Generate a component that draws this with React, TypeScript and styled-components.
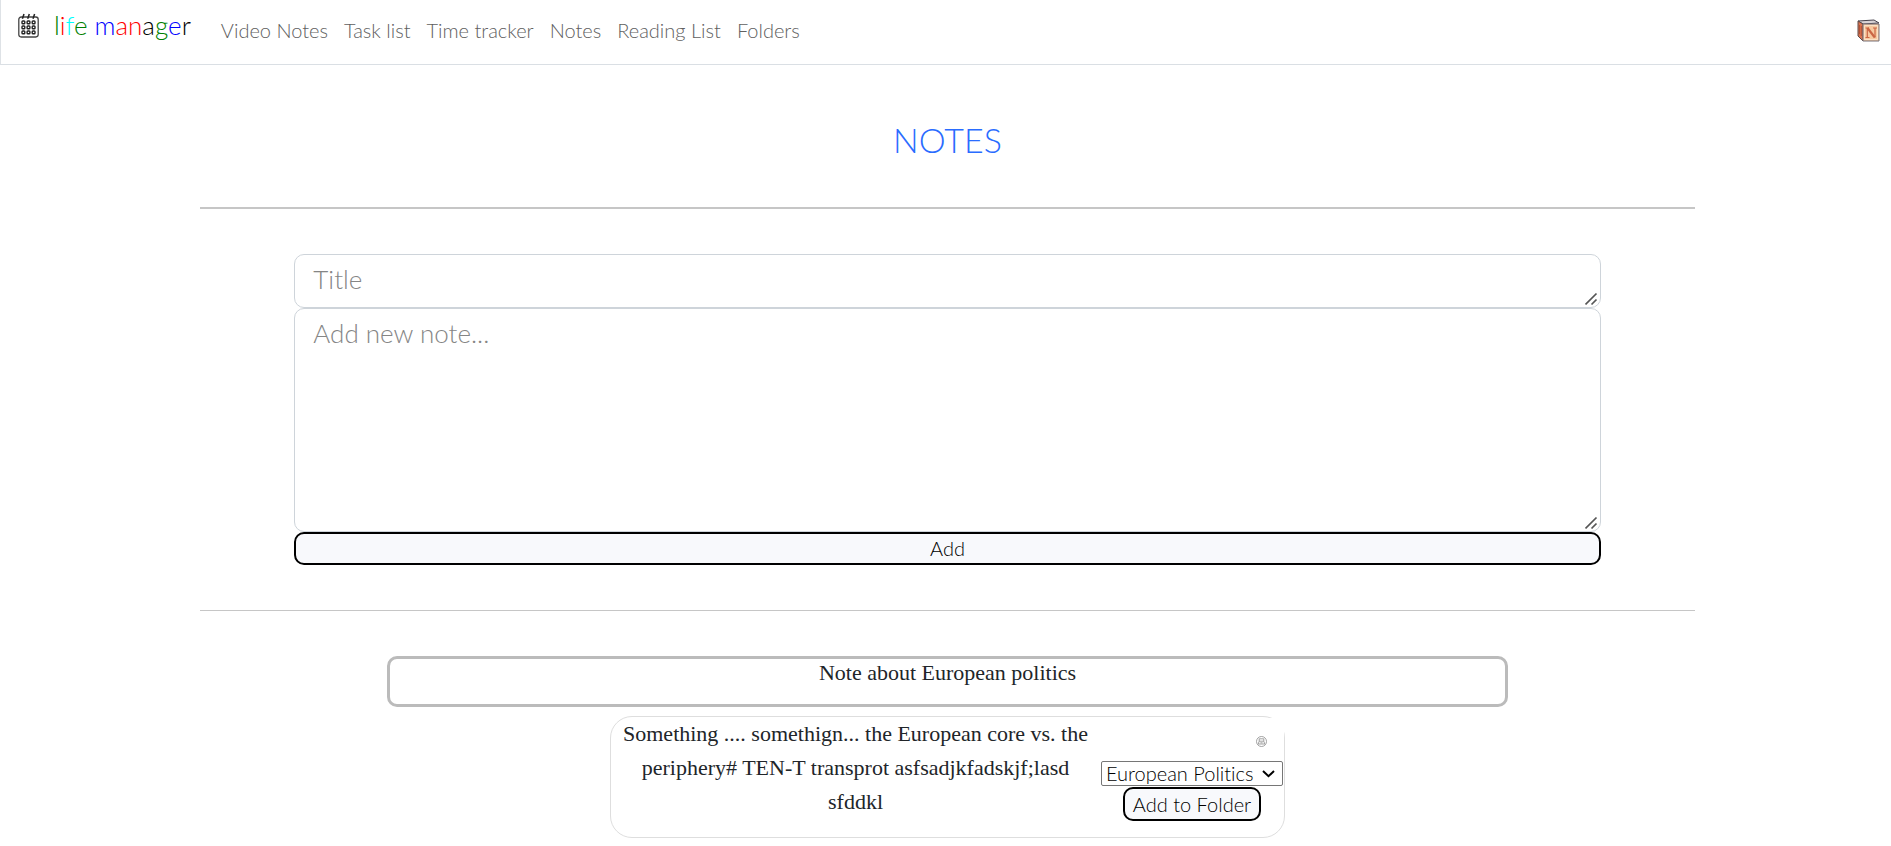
import React from 'react';
import styled, { createGlobalStyle } from 'styled-components';

const sans = "'Century Gothic', Lato, 'Open Sans', sans-serif";
const serif = "'Liberation Serif', 'Times New Roman', serif";

const resizeGrip =
  "data:image/svg+xml,%3Csvg xmlns='http://www.w3.org/2000/svg' width='17' height='17' fill='none' stroke='%23555' stroke-width='1.7'%3E%3Cpath d='M1.5 13.5 12.5 2.5M7.5 13.5l5-5'/%3E%3C/svg%3E";

const GlobalStyle = createGlobalStyle`
  *, *::before, *::after { box-sizing: border-box; }
  body {
    margin: 0;
    background: #fff;
    color: #212529;
    font-family: ${sans};
    font-weight: 300;
    font-size: 20px;
  }
`;

const Header = styled.header`
  display: flex;
  align-items: flex-start;
  height: 65px;
  padding: 9px 11px 0 17px;
  border-left: 1px solid #dee2e6;
  border-bottom: 1px solid #dadfe4;
`;

const Brand = styled.a`
  display: flex;
  gap: 15px;
  margin-right: 22px;
  font-size: 26px;
  line-height: 32px;
  color: #000;
  text-decoration: none;

  svg { margin-top: 4px; }
`;

const Letter = styled.span<{ $color: string }>`
  color: ${p => p.$color};
`;

const Nav = styled.nav`
  display: flex;
  flex: 1;
  padding-top: 9px;
`;

const NavLink = styled.a`
  padding: 0 8px;
  line-height: 24px;
  color: #606060;
  text-decoration: none;
  white-space: nowrap;
`;

const HomeLink = styled.a`
  display: block;
  margin-top: 10px;
  line-height: 0;
`;

const Main = styled.main`
  display: flex;
  flex-direction: column;
  align-items: center;
  padding: 53px 9px 0 13px;
`;

const Heading = styled.h1`
  margin: 0;
  font-size: 34px;
  font-weight: 300;
  line-height: 44px;
  color: #2a6cff;
`;

const Divider = styled.hr<{ $thickness: number }>`
  width: 80%;
  height: ${p => p.$thickness}px;
  margin: 45px 0;
  border: 0;
  background: #c6c6c6;
`;

const NoteForm = styled.form`
  display: flex;
  flex-direction: column;
  width: 70%;
  padding: 0 1px;
`;

const Field = styled.textarea<{ $height: number }>`
  display: block;
  width: 100%;
  height: ${p => p.$height}px;
  padding: 6px 18px;
  border: 1px solid #ced4da;
  border-radius: 10px;
  background: #fff;
  color: #212529;
  font: 300 26px/36px ${sans};
  resize: both;
  outline: 0;
  overflow: auto;

  &::placeholder { color: #858585; opacity: 1; }
  &::-webkit-scrollbar { width: 17px; height: 17px; }
  &::-webkit-resizer { background: url("${resizeGrip}") no-repeat center; }
`;

const Button = styled.button<{ $height: number }>`
  height: ${p => p.$height}px;
  padding: 0 8px 1px;
  border: 2px solid #000;
  border-radius: 10px;
  background: #f8f9fc;
  color: #000;
  font: 300 20px/24px ${sans};
  cursor: pointer;
`;

const NoteTitle = styled.h2`
  width: 60%;
  height: 51px;
  margin: 0 0 9px;
  border: 3px solid #bbb;
  border-radius: 10px;
  font: 400 22px/28px ${serif};
  text-align: center;
`;

const NoteCard = styled.article`
  display: flex;
  width: 675px;
  max-width: 100%;
  min-height: 122px;
  border: 1px solid #dedede;
  border-radius: 22px;
`;

const NoteText = styled.p`
  flex: 1;
  margin: 0;
  padding: 0 5px;
  font: 400 22px/34px ${serif};
  text-align: center;
`;

const Controls = styled.div`
  display: flex;
  flex-direction: column;
  align-items: center;
  width: 184px;
  padding-top: 1px;
`;

const DeleteButton = styled.button`
  display: flex;
  align-items: center;
  justify-content: center;
  align-self: flex-end;
  width: 46px;
  height: 43px;
  padding: 4px 0 0;
  border: 0;
  background: #fff;
  cursor: pointer;
`;

const SelectBox = styled.div`
  display: grid;
  grid-template-rows: 23px;
  align-items: center;
  width: 182px;
  height: 25px;
  margin-bottom: 1px;
  border: 1px solid #767676;
  border-radius: 2px;

  & > * { grid-area: 1 / 1; }
  svg { justify-self: end; margin-right: 7px; pointer-events: none; }
`;

const FolderSelect = styled.select`
  appearance: none;
  width: 100%;
  height: 27px;
  padding: 0 24px 2px 4px;
  border: 0;
  background: transparent;
  color: #000;
  font: 300 20px/24px ${sans};
  font-variant-ligatures: none;
`;

const CalendarIcon = () => (
  <svg width="21" height="25" viewBox="0 0 21 25" fill="none" stroke="#222" aria-hidden="true">
    <rect x="0.8" y="4" width="19.4" height="20" rx="2.4" stroke="#444" strokeWidth="1.3" />
    <path d="M4.4 5.8 6 1M9.7 5.8 11.3 1M15 5.8 16.6 1" strokeWidth="1.5" />
    {[8, 13, 18].map(y =>
      [4, 9.1, 14.2].map(x => (
        <rect key={`${x}-${y}`} x={x} y={y} width="2.8" height="2.8" rx="0.8" strokeWidth="1.4" />
      ))
    )}
  </svg>
);

const BlockIcon = () => (
  <svg width="23" height="23" viewBox="0 0 23 23" role="img" aria-label="Home">
    <path d="M1 2 17 1 22 4 6 5Z" fill="#d8d3d6" stroke="#46424c" strokeWidth="1" />
    <path d="M1 2 6 5V22L1 17Z" fill="#d9734f" stroke="#5d4a4a" strokeWidth="1" />
    <path d="M2.5 6v9M4.3 7v10" stroke="#a9492f" strokeWidth="0.8" />
    <path d="M6 5H22V22H6Z" fill="#f6c9a0" stroke="#777078" strokeWidth="1" />
    <path d="M7.5 6.5H20.5V20.5H7.5Z" fill="none" stroke="#fbe0c4" strokeWidth="1" />
    <path d="M8.5 9H12M16 9H20M8.5 18.5H12.5M10.3 9V18.5M18 9V18.5" stroke="#cb6543" strokeWidth="1.2" />
    <path d="M10.5 9 17.8 18.5" stroke="#cb6543" strokeWidth="2.2" />
  </svg>
);

const DeleteIcon = () => (
  <svg width="11" height="11" viewBox="0 0 11 11" fill="none" stroke="#8c8c8c" strokeWidth="0.8" aria-hidden="true">
    <circle cx="5.5" cy="5.5" r="5" />
    <path d="M3.2 2.8h4.6v2.4H3.2zM3.2 5.2 2.2 8h6.6L7.8 5.2M4.4 6.8h2.2" />
  </svg>
);

const ChevronIcon = () => (
  <svg width="13" height="8" viewBox="0 0 13 8" fill="none" stroke="#000" strokeWidth="2" aria-hidden="true">
    <path d="M1 1 6.5 6.2 12 1" />
  </svg>
);

const brandLetters: [string, string][] = [
  ['l', 'green'], ['i', 'red'], ['f', 'cyan'], ['e', 'green'], [' ', 'black'],
  ['m', 'blue'], ['a', 'red'], ['n', 'red'], ['a', 'black'], ['g', 'green'], ['e', 'blue'], ['r', 'black'],
];

const links = ['Video Notes', 'Task list', 'Time tracker', 'Notes', 'Reading List', 'Folders'];

export default function App() {
  return (
    <>
      <GlobalStyle />
      <Header>
        <Brand href="#" aria-label="life manager">
          <CalendarIcon />
          <span>
            {brandLetters.map(([char, color], i) => (
              <Letter key={i} $color={color}>{char}</Letter>
            ))}
          </span>
        </Brand>
        <Nav>
          {links.map(label => <NavLink key={label} href="#">{label}</NavLink>)}
        </Nav>
        <HomeLink href="#"><BlockIcon /></HomeLink>
      </Header>
      <Main>
        <Heading>NOTES</Heading>
        <Divider $thickness={2} />
        <NoteForm onSubmit={e => e.preventDefault()}>
          <Field $height={54} placeholder="Title" aria-label="Title" />
          <Field $height={224} placeholder="Add new note..." aria-label="Add new note" />
          <Button type="submit" $height={33}>Add</Button>
        </NoteForm>
        <Divider $thickness={1} />
        <NoteTitle>Note about European politics</NoteTitle>
        <NoteCard>
          <NoteText>
            Something .... somethign... the European core vs. the periphery# TEN-T transprot
            asfsadjkfadskjf;lasd sfddkl
          </NoteText>
          <Controls>
            <DeleteButton type="button" aria-label="Delete note"><DeleteIcon /></DeleteButton>
            <SelectBox>
              <FolderSelect aria-label="Folder" defaultValue="European Politics">
                <option>European Politics</option>
              </FolderSelect>
              <ChevronIcon />
            </SelectBox>
            <Button type="button" $height={34}>Add to Folder</Button>
          </Controls>
        </NoteCard>
      </Main>
    </>
  );
}
